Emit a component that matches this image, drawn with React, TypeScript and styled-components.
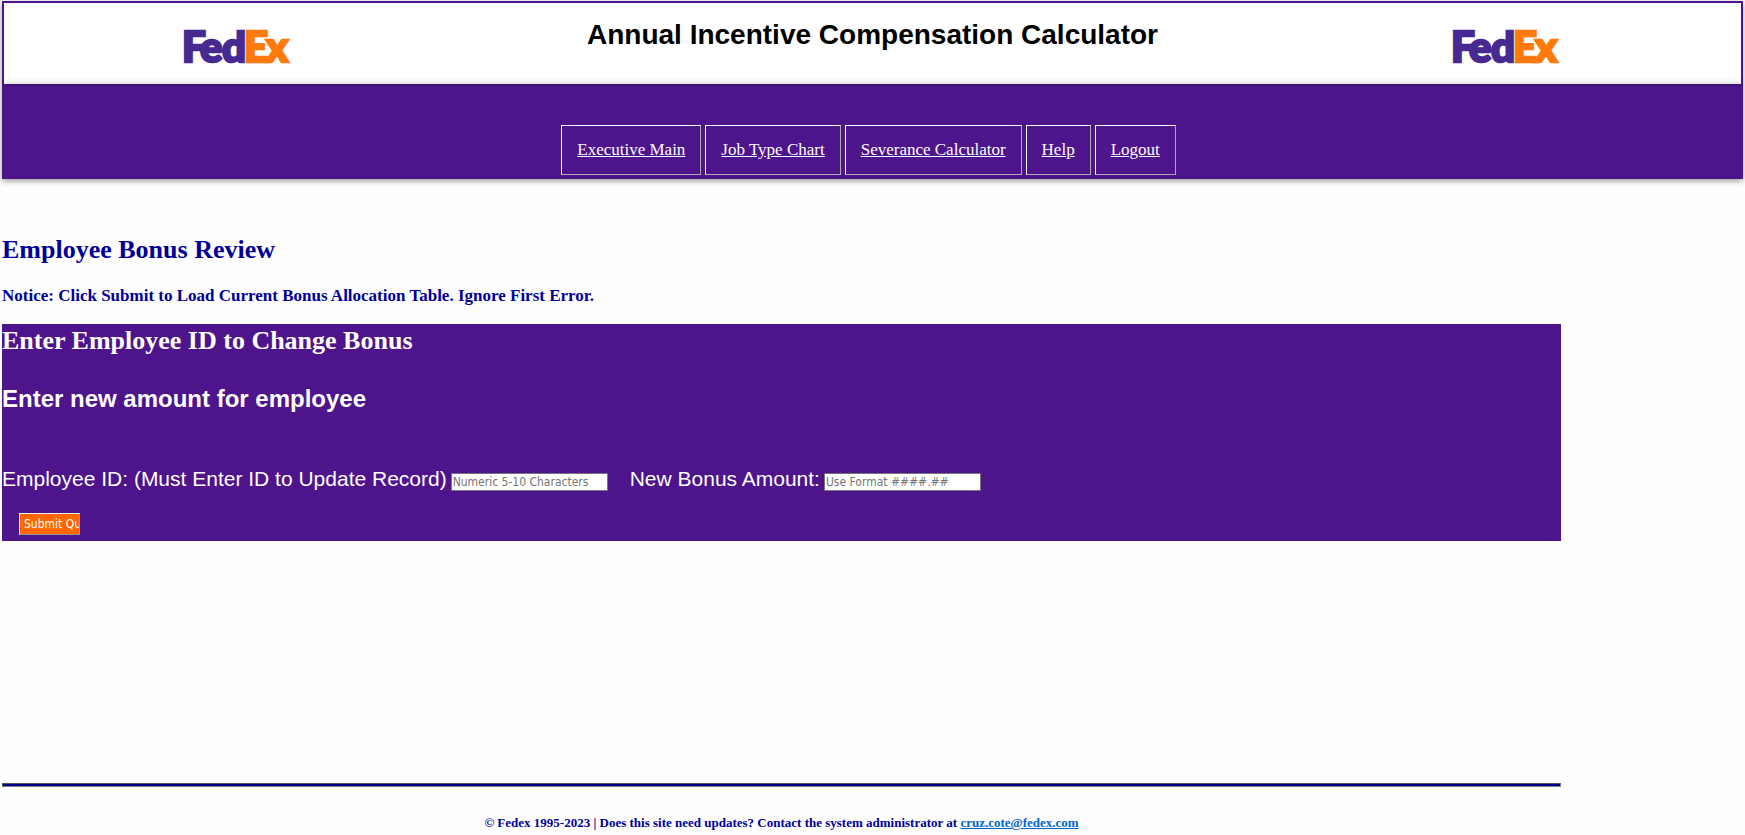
import React from "react";
import styled, { createGlobalStyle } from "styled-components";

const purple = "#4d148c";
const navy = "#000099";
const serif = '"Baskerville Old Face", "Liberation Serif", serif';
const sans = '"Liberation Sans", Arial, sans-serif';
const uiFont = 'Tahoma, "DejaVu Sans Condensed", "DejaVu Sans", sans-serif';

const GlobalStyle = createGlobalStyle`
  * { box-sizing: border-box; }
  body {
    margin: 0;
    background: #fefefe;
    font-family: ${serif};
  }
`;

const Page = styled.div`
  padding: 1px 2px 0;
`;

const Header = styled.header`
  box-shadow: 0 2px 6px rgba(0, 0, 0, 0.4);
`;

const Banner = styled.div`
  display: flex;
  justify-content: space-between;
  height: 85px;
  padding: 0 180px;
  border: 2px solid ${purple};
  background: #fff;
`;

const Title = styled.h1`
  margin: 15px 0 0;
  font: bold 28px/34px ${sans};
  color: #000;
`;

const LogoImage = styled.svg`
  width: 108px;
  height: 36px;
  margin-top: 27px;
  overflow: visible;
  font-family: Lato, sans-serif;
  font-weight: 900;
  font-size: 42px;
`;

const LogoPart = styled.text`
  fill: ${(p) => p.color};
  stroke: ${(p) => p.color};
  stroke-width: 2.5px;
`;

const Nav = styled.nav`
  display: flex;
  justify-content: center;
  gap: 4px;
  padding: 39px 8px 4px 0;
  background: ${purple};
  box-shadow: 0 0 8px rgba(0, 0, 0, 0.4);
  clip-path: inset(-8px 0 0 0);
`;

const NavLink = styled.a`
  padding: 14px 15px;
  border: 1px solid;
  border-color: #fff #aaa #aaa #fff;
  font: 17px/20px "Liberation Serif", serif;
  color: #fff;
`;

const Main = styled.main`
  margin-right: 182px;
`;

const Heading = styled.h2<{ $light?: boolean }>`
  margin: 0;
  font: bold 26px/34px ${serif};
  color: ${(p) => (p.$light ? "#fff" : navy)};
`;

const Intro = styled.section`
  padding: 54px 0 18px;
`;

const Notice = styled.p`
  margin: 19px 0 0;
  font: bold 17px/20px ${serif};
  color: ${navy};
`;

const Panel = styled.section`
  padding-bottom: 6px;
  background: ${purple};
  color: #fff;
`;

const SubHeading = styled.h2`
  margin: 25px 0 52px;
  font: bold 24px/32px ${sans};
`;

const FieldRow = styled.div`
  display: flex;
  gap: 22px;
`;

const Field = styled.label`
  display: flex;
  align-items: center;
  gap: 4px;
  font: 21px/24px ${sans};
`;

const TextInput = styled.input`
  width: 157px;
  height: 18px;
  margin-top: 6px;
  padding: 0 1px;
  border: 1px solid #767676;
  border-radius: 1px;
  background: #fff;
  font: 12px/16px ${uiFont};
  &::placeholder { color: #757575; }
`;

const SubmitButton = styled.button`
  display: block;
  width: 61px;
  height: 22px;
  margin: 22px 0 0 17px;
  padding: 0 4px;
  overflow: hidden;
  border: 1px solid;
  border-color: #eee #999 #999 #eee;
  background: #ff6600;
  font: 12px/20px ${uiFont};
  text-align: left;
  white-space: nowrap;
  color: #fff;
`;

const Rule = styled.hr`
  height: 4px;
  margin: 242px 0 26px;
  border: 1px solid;
  border-color: #555 #808080 #808080 #555;
  background: #00008b;
`;

const Footer = styled.footer`
  font: bold 13px/20px ${serif};
  text-align: center;
  color: ${navy};
`;

const MailLink = styled.a`
  color: #0066cc;
`;

const links = ["Executive Main", "Job Type Chart", "Severance Calculator", "Help", "Logout"];

function Logo() {
  return (
    <LogoImage viewBox="0 0 108 36" role="img" aria-label="FedEx">
      <LogoPart y="32" x="-2 16 38" color="#472a91">Fed</LogoPart>
      <LogoPart y="32" x="60 82" color="#ff7a08">Ex</LogoPart>
    </LogoImage>
  );
}

export default function App() {
  return (
    <Page>
      <GlobalStyle />
      <Header>
        <Banner>
          <Logo />
          <Title>Annual Incentive Compensation Calculator</Title>
          <Logo />
        </Banner>
        <Nav>
          {links.map((label) => (
            <NavLink key={label} href="#">{label}</NavLink>
          ))}
        </Nav>
      </Header>
      <Main>
        <Intro>
          <Heading>Employee Bonus Review</Heading>
          <Notice>Notice: Click Submit to Load Current Bonus Allocation Table. Ignore First Error.</Notice>
        </Intro>
        <Panel>
          <Heading $light>Enter Employee ID to Change Bonus</Heading>
          <SubHeading>Enter new amount for employee</SubHeading>
          <form onSubmit={(e) => e.preventDefault()}>
            <FieldRow>
              <Field>
                Employee ID: (Must Enter ID to Update Record)
                <TextInput name="employeeId" placeholder="Numeric 5-10 Characters" />
              </Field>
              <Field>
                New Bonus Amount:
                <TextInput name="bonus" placeholder="Use Format ####.##" />
              </Field>
            </FieldRow>
            <SubmitButton type="submit">Submit Query</SubmitButton>
          </form>
        </Panel>
        <Rule />
        <Footer>
          © Fedex 1995-2023 | Does this site need updates? Contact the system administrator at{" "}
          <MailLink href="mailto:cruz.cote@fedex.com">cruz.cote@fedex.com</MailLink>
        </Footer>
      </Main>
    </Page>
  );
}
